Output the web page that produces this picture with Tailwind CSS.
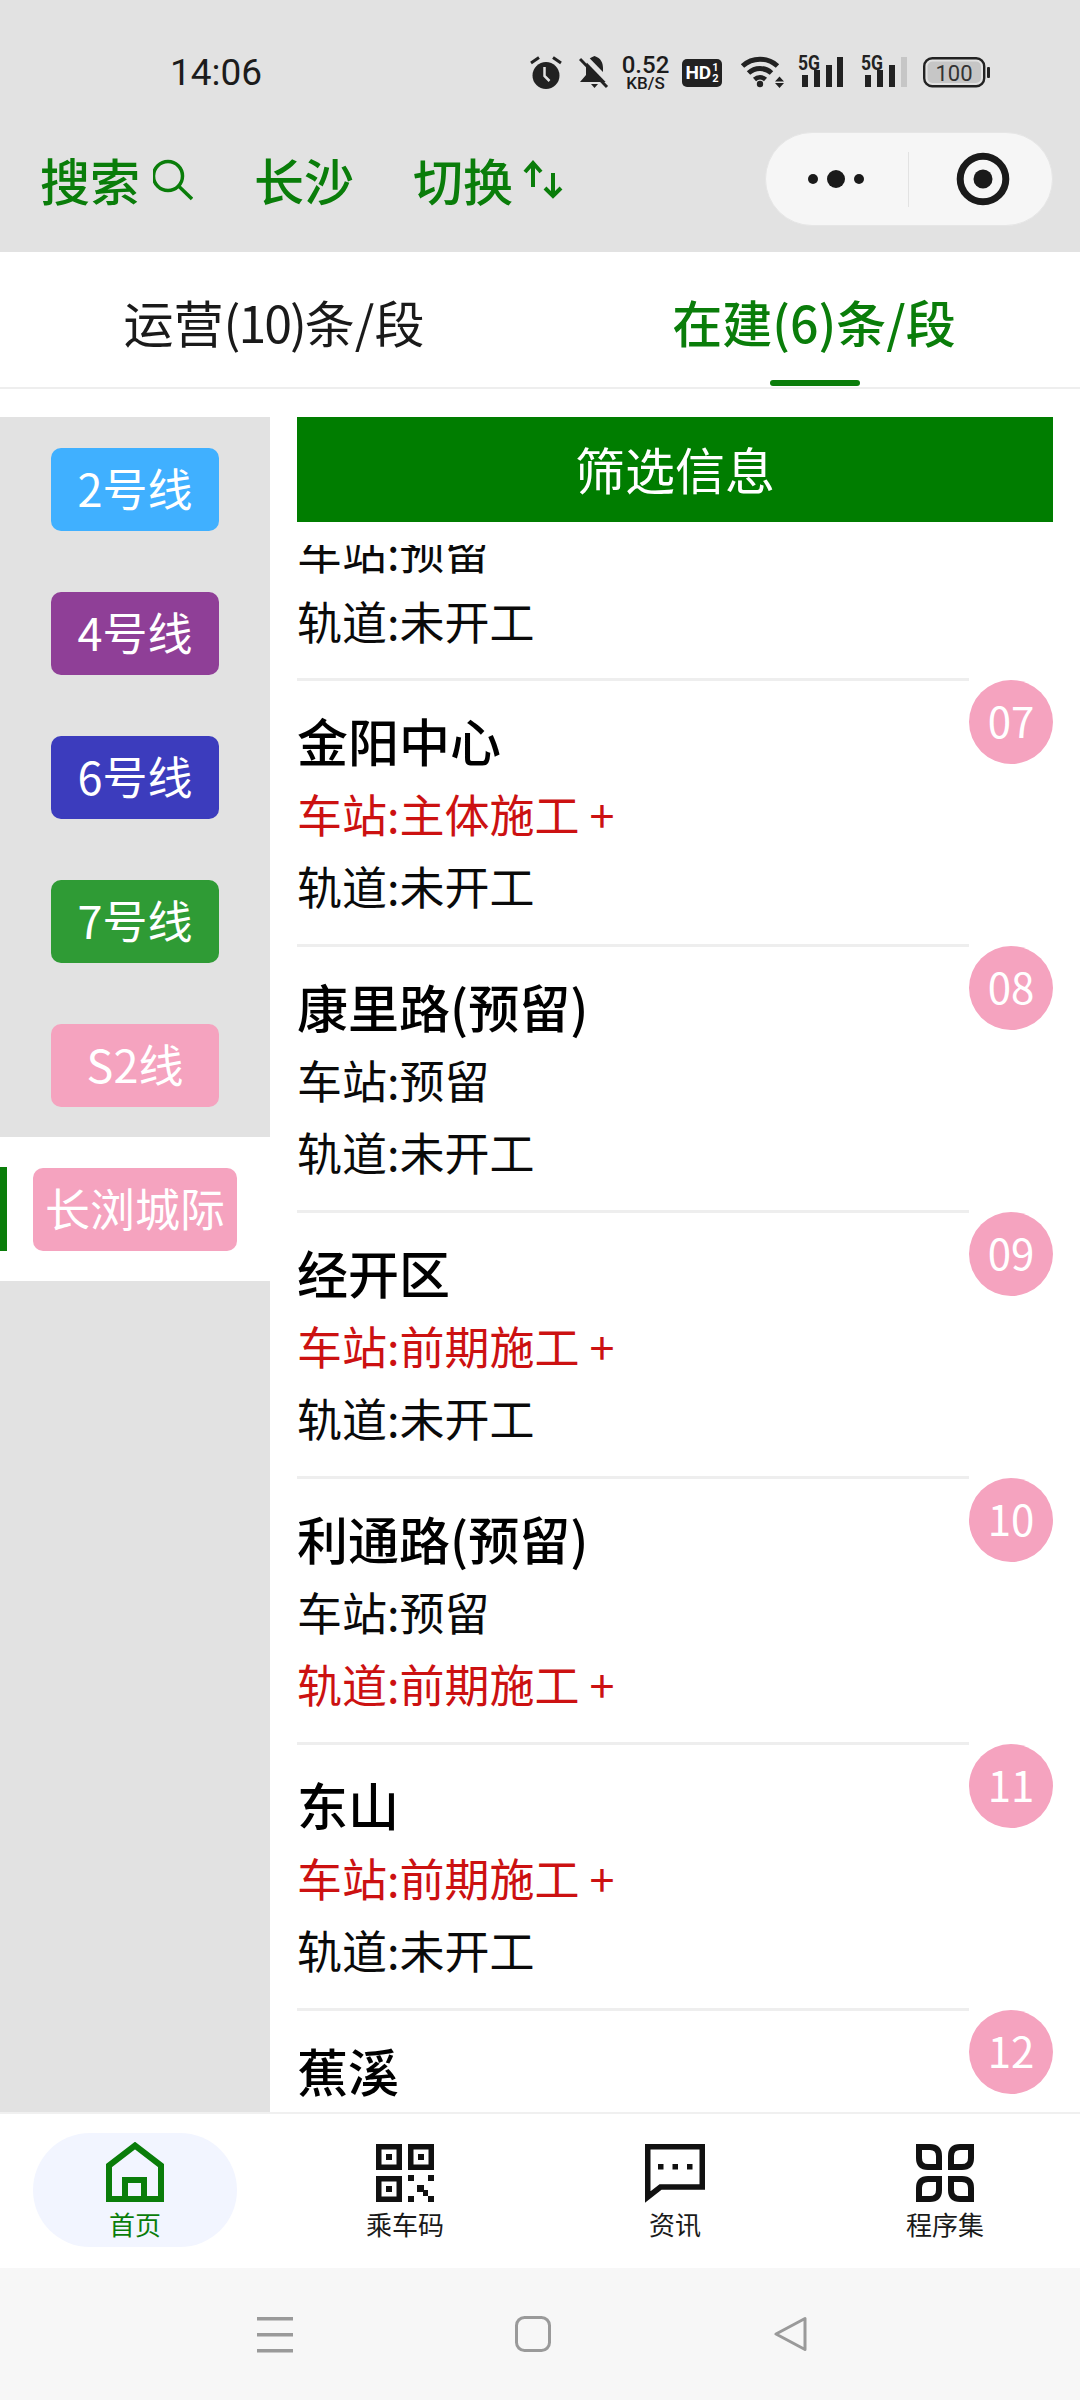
<!DOCTYPE html>
<html lang="zh">
<head>
<meta charset="utf-8">
<script src="https://cdn.jsdelivr.net/npm/@tailwindcss/browser@4"></script>
<title>线路</title>
</head>
<body>
<div class="w-[1080px] h-[2400px] flex flex-col overflow-hidden bg-white font-['Noto_Sans_CJK_SC',sans-serif]">

  <header class="h-[252px] bg-[#e2e2e2] flex flex-col shrink-0">
    <div class="h-[132px] pt-[55px] pl-[170px] flex items-start text-[#1c1c1c]">
      <div class="w-[92px] h-[36px] leading-[36px] text-[37px] font-['Roboto',sans-serif]">14:06</div>
      <svg class="ml-[268px]" width="32" height="36" viewBox="0 0 32 36"><circle cx="16" cy="20.5" r="13.5" fill="#222"/><path d="M1 8 9 2.500M31 8 23 2.500" stroke="#222" stroke-width="3" fill="none"/><path d="M14.500 12V21L19.500 26" stroke="#e2e2e2" stroke-width="2.500" fill="none"/></svg>
      <svg class="ml-[17px]" width="31" height="36" viewBox="0 0 31 36"><path d="M15.500 1C9 3 7 8 7 13V20L1 27H30L24 20V13C24 8 22 3 15.500 1Z" fill="#222"/><path d="M12 29H19L15.500 33Z" fill="#222"/><path d="M4 0 33 30" stroke="#e2e2e2" stroke-width="5" fill="none"/><path d="M1 4 28 32" stroke="#222" stroke-width="3" fill="none"/></svg>
      <div class="ml-[11px] w-[49px] h-[36px] flex flex-col items-center font-['Roboto',sans-serif] font-medium">
        <span class="text-[24px] leading-[20px]">0.52</span>
        <span class="text-[17px] leading-[15px] mt-[1px]">KB/S</span>
      </div>
      <div class="ml-[12px] mt-[4px] w-[40px] h-[28px] rounded-[5px] bg-[#222] text-white flex items-center justify-center font-['Roboto',sans-serif] font-bold">
        <span class="text-[19px] leading-[28px]">HD</span>
        <span class="flex flex-col items-center text-[11px] leading-[11px] ml-[1px]"><span>1</span><span>2</span></span>
      </div>
      <svg class="ml-[18px]" width="45" height="36" viewBox="0 0 45 36"><path d="M2.500 11A26 26 0 0 1 37.500 11" stroke="#222" stroke-width="5" fill="none"/><path d="M8.500 18A17 17 0 0 1 31.500 18" stroke="#222" stroke-width="5" fill="none"/><path d="M14.500 24.500A8 8 0 0 1 25.500 24.500" stroke="#222" stroke-width="4.500" fill="none"/><circle cx="20" cy="29" r="3.200" fill="#222"/><path d="M35 26.500 39.500 21.500 44 26.500ZM35 28 39.500 33 44 28Z" fill="#222"/></svg>
      <svg class="ml-[13px] overflow-visible" width="45" height="36" viewBox="0 0 45 36"><text x="0" y="15" font-family="Roboto" font-weight="700" font-size="21" fill="#222" textLength="22" lengthAdjust="spacingAndGlyphs">5G</text><rect x="4" y="20" width="6" height="12" fill="#222"/><rect x="16" y="15" width="6" height="17" fill="#222"/><rect x="28" y="10" width="6" height="22" fill="#222"/><rect x="39" y="2" width="6" height="30" fill="#222"/></svg>
      <svg class="ml-[18px] overflow-visible" width="46" height="36" viewBox="0 0 46 36"><text x="0" y="15" font-family="Roboto" font-weight="700" font-size="21" fill="#222" textLength="22" lengthAdjust="spacingAndGlyphs">5G</text><rect x="4" y="20" width="6" height="12" fill="#222"/><rect x="16" y="15" width="6" height="17" fill="#222"/><rect x="28" y="10" width="6" height="22" fill="#222"/><rect x="40" y="2" width="6" height="30" fill="#c6c6c6"/></svg>
      <svg class="ml-[16px]" width="67" height="36" viewBox="0 0 67 36"><rect x="1.200" y="3.200" width="60" height="28" rx="8" fill="none" stroke="#222" stroke-width="2.400"/><rect x="4.500" y="6.500" width="53.500" height="21.500" rx="5" fill="#c6c6c6"/><rect x="64" y="12" width="3" height="11" rx="1" fill="#222"/><text x="31" y="25.500" text-anchor="middle" font-family="Roboto" font-size="22" fill="#333">100</text></svg>
    </div>
    <div class="h-[94px] flex items-center pl-[40px] pr-[27px] text-[50px] leading-[94px] font-medium text-[#0a7d0a]">
      <span>搜索</span>
      <svg class="ml-[13px]" width="40" height="48" viewBox="0 0 40 48"><circle cx="15" cy="21" r="14.500" fill="none" stroke="#0a7d0a" stroke-width="3.500"/><path d="M25.500 31 39 44" stroke="#0a7d0a" stroke-width="3.500" fill="none"/></svg>
      <span class="ml-[61px]">长沙</span>
      <span class="ml-[59px]">切换</span>
      <svg class="ml-[9px]" width="42" height="42" viewBox="0 0 42 42"><path d="M11 5V29M3 14 11 5 19 14" stroke="#0a7d0a" stroke-width="4" fill="none"/><path d="M31 15V38M23 30 31 38 39 30" stroke="#0a7d0a" stroke-width="4" fill="none"/></svg>
      <div class="ml-auto w-[288px] h-[94px] rounded-full bg-[#f6f6f6] border border-[#e6e6e6] flex items-center">
        <svg class="ml-[37px]" width="66" height="20" viewBox="0 0 66 20"><circle cx="10" cy="10" r="5" fill="#1a1a1a"/><circle cx="33" cy="10" r="9" fill="#1a1a1a"/><circle cx="56" cy="10" r="5" fill="#1a1a1a"/></svg>
        <div class="ml-[39px] w-[1px] h-[55px] bg-[#e2e2e2]"></div>
        <svg class="ml-[47px]" width="54" height="54" viewBox="0 0 54 54"><circle cx="27" cy="27" r="22.800" fill="none" stroke="#1a1a1a" stroke-width="7"/><circle cx="27" cy="27" r="9.500" fill="#1a1a1a"/></svg>
      </div>
    </div>
  </header>

  <nav class="h-[137px] shrink-0 flex border-b-2 border-[#eeeeee] text-[50px]">
    <div class="w-[548px] flex items-center justify-center pt-[3px] text-[#1a1a1a]"><span>运营<span class="tracking-[-2px]">(10)</span>条/段</span></div>
    <div class="relative flex-1 flex items-center justify-center pt-[3px] font-medium text-[#0a7d0a]">
      在建(6)条/段
      <span class="absolute left-[222px] bottom-[1px] w-[90px] h-[6px] rounded-full bg-[#0a7d0a]"></span>
    </div>
  </nav>

  <main class="flex-1 min-h-0 flex pt-[28px]">
    <aside class="w-[270px] shrink-0 bg-[#e2e2e2] text-[45px] text-white">
      <div class="h-[144px] flex items-center justify-center"><div class="w-[168px] h-[83px] pb-[2px] rounded-[10px] bg-[#40b0ff] flex items-center justify-center">2号线</div></div>
      <div class="h-[144px] flex items-center justify-center"><div class="w-[168px] h-[83px] pb-[2px] rounded-[10px] bg-[#8f3f97] flex items-center justify-center">4号线</div></div>
      <div class="h-[144px] flex items-center justify-center"><div class="w-[168px] h-[83px] pb-[2px] rounded-[10px] bg-[#3c3cbd] flex items-center justify-center">6号线</div></div>
      <div class="h-[144px] flex items-center justify-center"><div class="w-[168px] h-[83px] pb-[2px] rounded-[10px] bg-[#2f9b35] flex items-center justify-center">7号线</div></div>
      <div class="h-[144px] flex items-center justify-center"><div class="w-[168px] h-[83px] pb-[2px] rounded-[10px] bg-[#f5a3bf] flex items-center justify-center">S2线</div></div>
      <div class="relative h-[144px] bg-white flex items-center justify-center">
        <span class="absolute left-0 top-[30px] w-[7px] h-[84px] bg-[#0a7d0a]"></span>
        <div class="w-[204px] h-[83px] pb-[2px] rounded-[10px] bg-[#f5a3bf] flex items-center justify-center">长浏城际</div>
      </div>
    </aside>

    <section class="flex-1 min-w-0 pl-[27px] pr-[27px] flex flex-col">
      <div class="h-[105px] pb-[2px] shrink-0 bg-[#007d00] text-white text-[50px] flex items-center justify-center">筛选信息</div>
      <div class="flex-1 min-h-0 mt-[23px] overflow-hidden text-[45px] leading-[70px] text-[#0a0a0a]">

        <div class="h-[133px] w-[671px] overflow-hidden flex flex-col justify-end pb-[22px]">
          <div class="shrink-0">车站:预留</div>
          <div class="shrink-0">轨道:未开工</div>
        </div>

        <article class="h-[266px] flex">
          <div class="w-[672px] border-t-[3px] border-[#eeeeee] pt-[24px]">
            <h3 class="text-[51px] font-medium text-black">金阳中心</h3>
            <p class="mt-[4px] text-[#cc1111]">车站:主体施工 +</p>
            <p class="mt-[2px]">轨道:未开工</p>
          </div>
          <div class="mt-[2px] w-[84px] h-[84px] pb-[4px] rounded-full bg-[#f5a3bf] text-[42px] text-white flex items-center justify-center">07</div>
        </article>

        <article class="h-[266px] flex">
          <div class="w-[672px] border-t-[3px] border-[#eeeeee] pt-[24px]">
            <h3 class="text-[51px] font-medium text-black">康里路(预留)</h3>
            <p class="mt-[4px]">车站:预留</p>
            <p class="mt-[2px]">轨道:未开工</p>
          </div>
          <div class="mt-[2px] w-[84px] h-[84px] pb-[4px] rounded-full bg-[#f5a3bf] text-[42px] text-white flex items-center justify-center">08</div>
        </article>

        <article class="h-[266px] flex">
          <div class="w-[672px] border-t-[3px] border-[#eeeeee] pt-[24px]">
            <h3 class="text-[51px] font-medium text-black">经开区</h3>
            <p class="mt-[4px] text-[#cc1111]">车站:前期施工 +</p>
            <p class="mt-[2px]">轨道:未开工</p>
          </div>
          <div class="mt-[2px] w-[84px] h-[84px] pb-[4px] rounded-full bg-[#f5a3bf] text-[42px] text-white flex items-center justify-center">09</div>
        </article>

        <article class="h-[266px] flex">
          <div class="w-[672px] border-t-[3px] border-[#eeeeee] pt-[24px]">
            <h3 class="text-[51px] font-medium text-black">利通路(预留)</h3>
            <p class="mt-[4px]">车站:预留</p>
            <p class="mt-[2px] text-[#cc1111]">轨道:前期施工 +</p>
          </div>
          <div class="mt-[2px] w-[84px] h-[84px] pb-[4px] rounded-full bg-[#f5a3bf] text-[42px] text-white flex items-center justify-center">10</div>
        </article>

        <article class="h-[266px] flex">
          <div class="w-[672px] border-t-[3px] border-[#eeeeee] pt-[24px]">
            <h3 class="text-[51px] font-medium text-black">东山</h3>
            <p class="mt-[4px] text-[#cc1111]">车站:前期施工 +</p>
            <p class="mt-[2px]">轨道:未开工</p>
          </div>
          <div class="mt-[2px] w-[84px] h-[84px] pb-[4px] rounded-full bg-[#f5a3bf] text-[42px] text-white flex items-center justify-center">11</div>
        </article>

        <article class="h-[266px] flex">
          <div class="w-[672px] border-t-[3px] border-[#eeeeee] pt-[24px]">
            <h3 class="text-[51px] font-medium text-black">蕉溪</h3>
          </div>
          <div class="mt-[2px] w-[84px] h-[84px] pb-[4px] rounded-full bg-[#f5a3bf] text-[42px] text-white flex items-center justify-center">12</div>
        </article>
      </div>
    </section>
  </main>

  <footer class="h-[156px] shrink-0 border-t-2 border-[#f0f0f0] grid grid-cols-4 text-[26px] leading-[30px] text-[#1a1a1a]">
    <div class="flex justify-center pt-[19px]">
      <div class="w-[204px] h-[114px] rounded-full bg-[#f2f5ff] flex flex-col items-center pt-[9px] text-[#0a7d0a]">
        <svg width="58" height="60" viewBox="0 0 58 60"><path d="M3 57V23.500L29 3.500 55 23.500V57Z" fill="none" stroke="#0a7d0a" stroke-width="6"/><path d="M19 58V38H38V58" fill="none" stroke="#0a7d0a" stroke-width="6"/></svg>
        <span class="mt-[7px]">首页</span>
      </div>
    </div>
    <div class="flex justify-center pt-[19px]">
      <div class="w-[204px] h-[114px] flex flex-col items-center pt-[11px]">
        <svg width="58" height="58" viewBox="0 0 58 58" fill="#111"><g fill="none" stroke="#111" stroke-width="5.500"><rect x="2.750" y="2.750" width="20.500" height="20.500"/><rect x="34.750" y="2.750" width="20.500" height="20.500"/><rect x="2.750" y="34.750" width="20.500" height="20.500"/></g><rect x="10" y="10" width="6" height="6"/><rect x="42" y="10" width="6" height="6"/><rect x="10" y="42" width="6" height="6"/><rect x="32" y="31" width="6" height="6"/><rect x="52" y="31" width="6" height="6"/><rect x="41" y="41" width="7" height="7"/><rect x="47" y="46" width="5" height="6"/><rect x="52" y="52" width="6" height="6"/><rect x="32" y="52" width="6" height="6"/></svg>
        <span class="mt-[7px]">乘车码</span>
      </div>
    </div>
    <div class="flex justify-center pt-[19px]">
      <div class="w-[204px] h-[114px] flex flex-col items-center pt-[11px]">
        <svg class="overflow-visible" width="60" height="58" viewBox="0 0 60 58" fill="#111"><path d="M2.750 2.750H57.250V43H15.500L2.750 53Z" fill="none" stroke="#111" stroke-width="5.500"/><rect x="13" y="20" width="5.500" height="5.500"/><rect x="27.500" y="20" width="5.500" height="5.500"/><rect x="42" y="20" width="5.500" height="5.500"/></svg>
        <span class="mt-[7px]">资讯</span>
      </div>
    </div>
    <div class="flex justify-center pt-[19px]">
      <div class="w-[204px] h-[114px] flex flex-col items-center pt-[11px]">
        <svg width="58" height="58" viewBox="0 0 58 58"><g fill="none" stroke="#111" stroke-width="6"><path d="M3 3H14Q23 3 23 12V23H12Q3 23 3 14Z"/><path d="M55 3H44Q35 3 35 12V23H46Q55 23 55 14Z"/><path d="M3 55H14Q23 55 23 46V35H12Q3 35 3 44Z"/><path d="M55 55H44Q35 55 35 46V35H46Q55 35 55 44Z"/></g></svg>
        <span class="mt-[7px]">程序集</span>
      </div>
    </div>
  </footer>

  <div class="h-[132px] shrink-0 bg-[#f7f7f7] flex items-center pl-[257px]">
    <svg width="36" height="37" viewBox="0 0 36 37" fill="#9a9a9a"><rect y="1" width="36" height="3.500"/><rect y="17" width="36" height="3.500"/><rect y="33" width="36" height="3.500"/></svg>
    <svg class="ml-[222px]" width="36" height="36" viewBox="0 0 36 36"><rect x="1.500" y="1.500" width="33" height="33" rx="8" fill="none" stroke="#9a9a9a" stroke-width="3"/></svg>
    <svg class="ml-[223px]" width="33" height="36" viewBox="0 0 33 36"><path d="M31 2.500V33.500L2 18Z" fill="none" stroke="#9a9a9a" stroke-width="3" stroke-linejoin="round"/></svg>
  </div>
</div>
</body>
</html>
